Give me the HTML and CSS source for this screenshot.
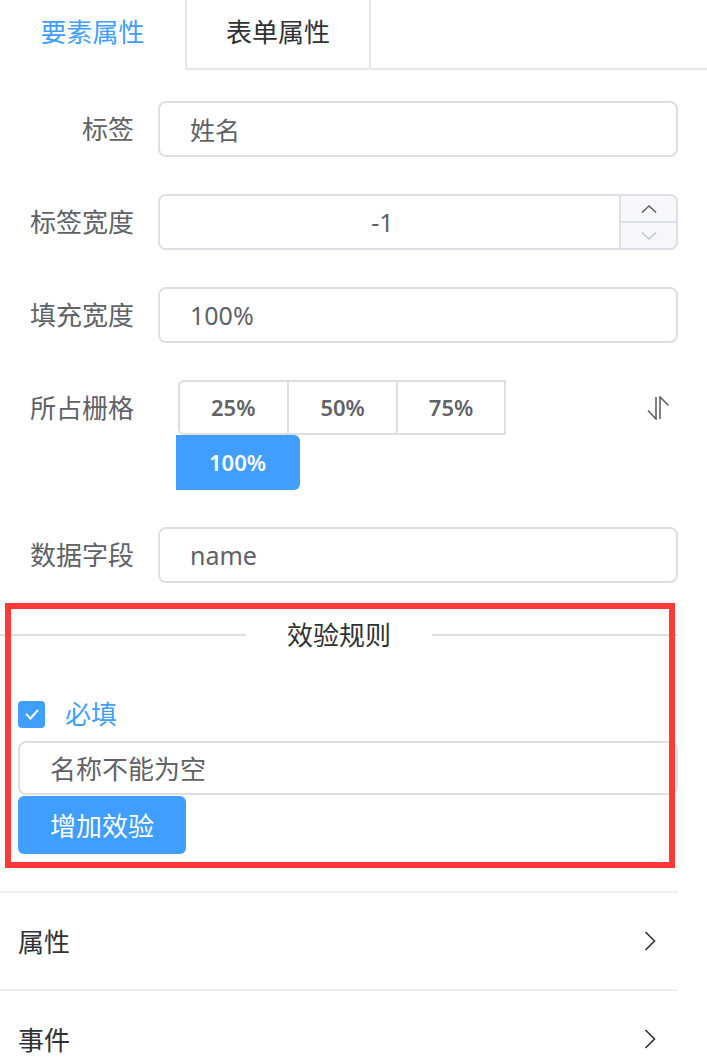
FILE: index.html
```html
<!DOCTYPE html>
<html lang="zh-CN">

<head>
    <meta charset="UTF-8">
    <meta name="viewport" content="width=device-width, initial-scale=1.0">
    <title>要素属性</title>
    <link rel="stylesheet" href="styles.css">
</head>

<body>
<div class="page">

    <div class="tabs">
        <div class="tab is-active">要素属性</div>
        <div class="tab">表单属性</div>
        <div class="tab-fill"></div>
    </div>

    <div class="content">

        <form class="form">
            <div class="form-item">
                <label class="form-label">标签</label>
                <div class="form-content">
                    <input class="input" type="text" value="姓名">
                </div>
            </div>

            <div class="form-item">
                <label class="form-label">标签宽度</label>
                <div class="form-content">
                    <div class="input-number">
                        <input class="input-number-inner" type="text" value="-1">
                        <div class="controls">
                            <span class="control">
                                <svg width="16" height="8" viewBox="0 0 16 8"><path d="M1 7.5 L8 1 L15 7.5" fill="none" stroke="#606266" stroke-width="1.5"/></svg>
                            </span>
                            <span class="control control-down">
                                <svg width="16" height="8" viewBox="0 0 16 8"><path d="M1 0.5 L8 7 L15 0.5" fill="none" stroke="#c0c4cc" stroke-width="1.5"/></svg>
                            </span>
                        </div>
                    </div>
                </div>
            </div>

            <div class="form-item">
                <label class="form-label">填充宽度</label>
                <div class="form-content">
                    <input class="input" type="text" value="100%">
                </div>
            </div>

            <div class="form-item">
                <label class="form-label">所占栅格</label>
                <div class="form-content">
                    <div class="radio-group">
                        <span class="radio-btn">25%</span>
                        <span class="radio-btn">50%</span>
                        <span class="radio-btn">75%</span>
                        <span class="radio-btn is-checked">100%</span>
                    </div>
                    <svg class="sort-icon" width="24" height="24" viewBox="0 0 24 24">
                        <path d="M10 1 V23 L2 14.5" fill="none" stroke="#606266" stroke-width="1.6"/>
                        <path d="M14 23 V1 L22.5 9.5" fill="none" stroke="#606266" stroke-width="1.6"/>
                    </svg>
                </div>
            </div>

            <div class="form-item">
                <label class="form-label">数据字段</label>
                <div class="form-content">
                    <input class="input" type="text" value="name">
                </div>
            </div>
        </form>

        <div class="divider"><span>效验规则</span></div>

        <div class="rules">
            <div class="checkbox">
                <span class="checkbox-box">
                    <svg width="16" height="12" viewBox="0 0 16 12"><path d="M2 6 L6.5 10.5 L14 2" fill="none" stroke="#fff" stroke-width="2"/></svg>
                </span>
                <span class="checkbox-label">必填</span>
            </div>
            <input class="input rule-input" type="text" value="名称不能为空">
            <button class="btn-primary" type="button">增加效验</button>
        </div>

        <div class="collapse">
            <div class="collapse-item">
                <span>属性</span>
                <svg width="12" height="20" viewBox="0 0 12 20"><path d="M1.5 1 L10.5 10 L1.5 19" fill="none" stroke="#303133" stroke-width="1.6"/></svg>
            </div>
            <div class="collapse-item">
                <span>事件</span>
                <svg width="12" height="20" viewBox="0 0 12 20"><path d="M1.5 1 L10.5 10 L1.5 19" fill="none" stroke="#303133" stroke-width="1.6"/></svg>
            </div>
        </div>

    </div>

    <div class="highlight"></div>

</div>
</body>
</html>
```

FILE: styles.css
```css
        body {
            font-family: "Noto Sans", "Noto Sans CJK SC", sans-serif;
            margin: 0;
            padding: 0;
            background-color: #fff;
            color: #606266;
            font-size: 26px;
        }

		.page {
			position: relative;
			overflow: hidden;
		}

		/* tabs */
		.tabs {
			display: flex;
			height: 70px;
		}

		.tab {
			box-sizing: border-box;
			width: 186px;
			line-height: 64px;
			text-align: center;
			color: #303133;
			border-left: 2px solid #e4e7ed;
			border-right: 2px solid #e4e7ed;
			border-bottom: 2px solid #e4e7ed;
		}

		.tab.is-active {
			width: 185px;
			color: #409eff;
			border: 0;
		}

		.tab-fill {
			flex: 1;
			border-bottom: 2px solid #e4e7ed;
		}

		.content {
			width: 678px;
		}

		/* form */
		.form {
			padding-top: 31px;
		}

		.form-item {
			display: flex;
			margin-bottom: 37px;
		}

		.form-label {
			box-sizing: border-box;
			width: 158px;
			padding-right: 24px;
			text-align: right;
			line-height: 56px;
		}

		.form-content {
			flex: 1;
			display: flex;
		}

		.input {
			box-sizing: border-box;
			width: 100%;
			height: 56px;
			border: 2px solid #dcdfe6;
			border-radius: 8px;
			padding: 0 30px;
			font: inherit;
			font-size: 25px;
			color: #606266;
			outline: none;
		}

		.input-number {
			flex: 1;
			display: flex;
			height: 56px;
			box-sizing: border-box;
			border: 2px solid #dcdfe6;
			border-radius: 8px;
			overflow: hidden;
		}

		.input-number-inner {
			flex: 1;
			min-width: 0;
			border: 0;
			padding: 0 40px 0 26px;
			text-align: center;
			font: inherit;
			font-size: 25px;
			color: #606266;
			outline: none;
		}

		.controls {
			width: 55px;
			display: flex;
			flex-direction: column;
			border-left: 2px solid #dcdfe6;
			background-color: #f5f7fa;
		}

		.control {
			flex: 1;
			display: flex;
			align-items: center;
			justify-content: center;
		}

		.control-down {
			border-top: 2px solid #dcdfe6;
		}

		/* radio buttons */
		.radio-group {
			display: flex;
			flex-wrap: wrap;
			width: 400px;
			margin-left: 20px;
		}

		.radio-btn {
			box-sizing: border-box;
			height: 55px;
			line-height: 51px;
			padding: 0 31px;
			border: 2px solid #dcdfe6;
			border-left: 0;
			font-size: 22px;
			font-weight: 600;
			color: #606266;
		}

		.radio-btn:first-child {
			border-left: 2px solid #dcdfe6;
			border-radius: 6px 0 0 6px;
			padding-right: 32px;
		}

		.radio-btn:last-child {
			border-radius: 0 6px 6px 0;
			padding-right: 32px;
		}

		.radio-btn.is-checked {
			background-color: #409eff;
			border-color: #409eff;
			color: #fff;
			box-shadow: -2px 0 0 0 #409eff;
		}

		.sort-icon {
			margin: 16px 8px 0 auto;
		}

		/* divider */
		.divider {
			display: flex;
			align-items: center;
			margin-top: 32px;
			line-height: 30px;
			color: #303133;
		}

		.divider::before, .divider::after {
			content: "";
			flex: 1;
			border-top: 2px solid #dcdfe6;
		}

		.divider span {
			padding: 0 41px;
		}

		/* rules */
		.rules {
			padding-left: 18px;
		}

		.checkbox {
			display: flex;
			align-items: center;
			height: 28px;
			margin-top: 50px;
		}

		.checkbox-box {
			width: 27px;
			height: 27px;
			border-radius: 4px;
			background-color: #409eff;
			display: flex;
			align-items: center;
			justify-content: center;
		}

		.checkbox-label {
			margin-left: 20px;
			color: #409eff;
			line-height: 28px;
		}

		.rule-input {
			display: block;
			height: 54px;
			margin-top: 13px;
			font-size: 26px;
		}

		.btn-primary {
			display: block;
			width: 168px;
			height: 58px;
			margin-top: 1px;
			border: 0;
			border-radius: 6px;
			background-color: #409eff;
			color: #fff;
			font: inherit;
			padding: 0;
		}

		/* collapse */
		.collapse {
			margin-top: 37px;
		}

		.collapse-item {
			display: flex;
			align-items: center;
			justify-content: space-between;
			height: 96px;
			padding: 0 22px 0 18px;
			border-top: 2px solid #ebeef5;
			color: #303133;
		}

		/* annotation box */
		.highlight {
			position: absolute;
			left: 5px;
			top: 603px;
			width: 670px;
			height: 265px;
			box-sizing: border-box;
			border: 6px solid #ff3838;
		}
```
